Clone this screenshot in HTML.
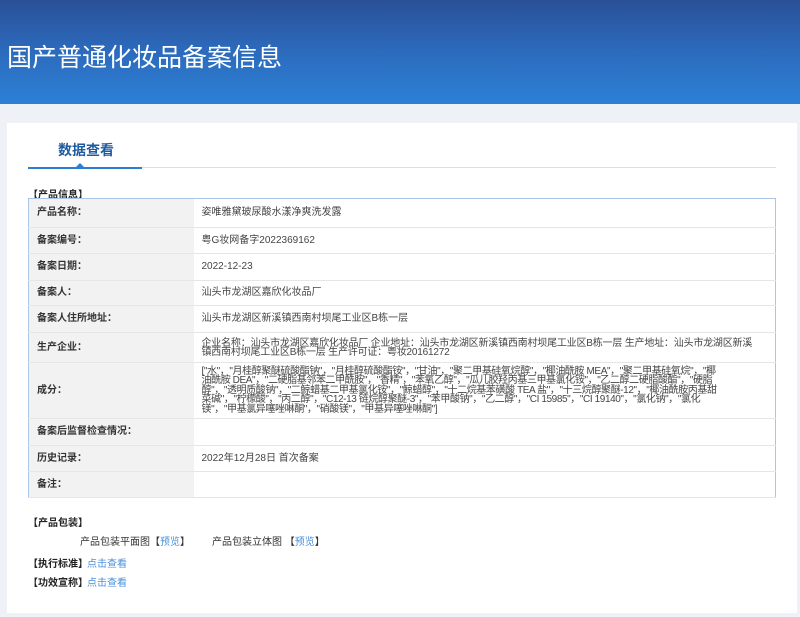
<!DOCTYPE html>
<html><head><meta charset="utf-8"><style>
*{margin:0;padding:0;box-sizing:border-box}
body{width:800px;height:617px;background:#eef2f6;font-family:"Liberation Sans","Noto Sans CJK SC",sans-serif;font-size:10px;color:#333;position:relative;overflow:hidden}
.hd{position:absolute;left:0;top:0;width:800px;height:104px;background:linear-gradient(180deg,#2a5097 0%,#2c6bbd 50%,#2b80d6 100%)}
.hd h1{position:absolute;left:7px;top:38px;font-size:25px;font-weight:normal;color:#fff;font-family:"Noto Sans CJK SC",sans-serif}
.card{position:absolute;left:7px;top:123px;width:790px;height:490px;background:#fff}
.tab{position:absolute;left:58px;top:140px;font-size:14px;color:#1d5a9e;font-weight:bold}
.ul{position:absolute;left:28px;top:167px;width:114px;height:2px;background:#2a7fd4}
.gl{position:absolute;left:142px;top:167px;width:634px;height:1px;background:#ddd}
.tri{position:absolute;left:76px;top:163px;width:0;height:0;border-left:4px solid transparent;border-right:4px solid transparent;border-bottom:4px solid #2a7fd4}
.sec{position:absolute;font-weight:bold;color:#222;font-size:10px}
table{position:absolute;left:28px;top:198px;width:748px;border-collapse:collapse;border:1px solid #a9c6ea}
td{border-bottom:1px solid #e6e6e6;vertical-align:middle;font-size:10px;line-height:10px}
td.l{width:165px;background:#f2f2f2;font-weight:bold;padding-left:8px;color:#333}
td.v{padding-left:8px;color:#444}
a{color:#4a90d9;text-decoration:none}
</style></head><body>
<div class="hd"><h1>国产普通化妆品备案信息</h1></div>
<div class="card"></div>
<div class="tab">数据查看</div>
<div class="ul"></div><div class="gl"></div><div class="tri"></div>
<div class="sec" style="left:28px;top:186px">【产品信息】</div>
<table>
<tr style="height:29px"><td class="l">产品名称：</td><td class="v">姿唯雅黛玻尿酸水漾净爽洗发露</td></tr>
<tr style="height:26px"><td class="l">备案编号：</td><td class="v">粤G妆网备字2022369162</td></tr>
<tr style="height:27px"><td class="l">备案日期：</td><td class="v">2022-12-23</td></tr>
<tr style="height:25px"><td class="l">备案人：</td><td class="v">汕头市龙湖区嘉欣化妆品厂</td></tr>
<tr style="height:27px"><td class="l">备案人住所地址：</td><td class="v">汕头市龙湖区新溪镇西南村坝尾工业区B栋一层</td></tr>
<tr style="height:30px"><td class="l">生产企业：</td><td class="v" style="line-height:9px;padding-right:20px;letter-spacing:-0.2px">企业名称：汕头市龙湖区嘉欣化妆品厂 企业地址：汕头市龙湖区新溪镇西南村坝尾工业区B栋一层 生产地址：汕头市龙湖区新溪镇西南村坝尾工业区B栋一层 生产许可证：粤妆20161272</td></tr>
<tr style="height:56px"><td class="l">成分：</td><td class="v" style="line-height:9.5px;padding-right:50px;letter-spacing:-0.4px">["水"，"月桂醇聚醚硫酸酯钠"，"月桂醇硫酸酯铵"，"甘油"，"聚二甲基硅氧烷醇"，"椰油酰胺 MEA"，"聚二甲基硅氧烷"，"椰油酰胺 DEA"，"二硬脂基邻苯二甲酰胺"，"香精"，"苯氧乙醇"，"瓜儿胶羟丙基三甲基氯化铵"，"乙二醇二硬脂酸酯"，"硬脂醇"，"透明质酸钠"，"二鲸蜡基二甲基氯化铵"，"鲸蜡醇"，"十二烷基苯磺酸 TEA 盐"，"十三烷醇聚醚-12"，"椰油酰胺丙基甜菜碱"，"柠檬酸"，"丙二醇"，"C12-13 链烷醇聚醚-3"，"苯甲酸钠"，"乙二醇"，"CI 15985"，"CI 19140"，"氯化钠"，"氯化镁"，"甲基氯异噻唑啉酮"，"硝酸镁"，"甲基异噻唑啉酮"]</td></tr>
<tr style="height:27px"><td class="l">备案后监督检查情况：</td><td class="v"></td></tr>
<tr style="height:26px"><td class="l">历史记录：</td><td class="v">2022年12月28日 首次备案</td></tr>
<tr style="height:26px"><td class="l">备注：</td><td class="v"></td></tr>
</table>
<div class="sec" style="left:28px;top:514px">【产品包装】</div>
<div style="position:absolute;left:80px;top:533px">产品包装平面图【<a>预览</a>】</div>
<div style="position:absolute;left:212px;top:533px">产品包装立体图 【<a>预览</a>】</div>
<div class="sec" style="left:28px;top:555px">【执行标准】</div><a style="position:absolute;left:87px;top:555px">点击查看</a>
<div class="sec" style="left:28px;top:574px">【功效宣称】</div><a style="position:absolute;left:87px;top:574px">点击查看</a>
</body></html>
